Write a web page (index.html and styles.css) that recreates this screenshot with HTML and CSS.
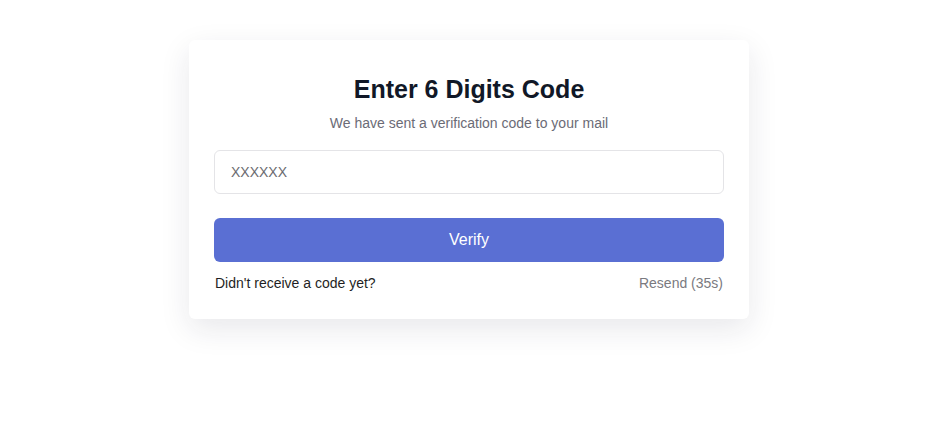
FILE: index.html
```html
<!DOCTYPE html>
<html lang="en">
<head>
    <meta charset="UTF-8">
    <meta name="viewport" content="width=device-width, initial-scale=1.0">
    <title>Verify Code</title>
    <link rel="stylesheet" href="styles.css">
</head>
<body>
    <div class="card">
        <h1 class="title">Enter 6 Digits Code</h1>
        <p class="subtitle">We have sent a verification code to your mail</p>
        <input class="code-input" type="text" placeholder="XXXXXX" maxlength="6">
        <button class="verify-btn">Verify</button>
        <div class="footer">
            <span class="footer-text">Didn't receive a code yet?</span>
            <span class="resend">Resend (35s)</span>
        </div>
    </div>
</body>
</html>
```
FILE: styles.css
```css
/* General */
body {
    font-family: "Liberation Sans", Arial, sans-serif;
    background: #fff;
    margin: 0;
    padding: 40px 0 0 7px;
    min-height: 100vh;
    box-sizing: border-box;
    display: flex;
    justify-content: center;
    align-items: flex-start;
}

.card {
    width: 560px;
    box-sizing: border-box;
    background: #fff;
    border-radius: 6px;
    padding: 35px 25px 28px;
    box-shadow: 0 10px 30px rgba(30, 30, 60, 0.1);
    display: flex;
    flex-direction: column;
}

.title {
    margin: 0;
    font-size: 25px;
    line-height: 28px;
    font-weight: bold;
    text-align: center;
    color: #111827;
}

.subtitle {
    margin: 12px 0 0;
    font-size: 14px;
    line-height: 16px;
    text-align: center;
    color: #6b6b76;
}

/* Input */
.code-input {
    margin-top: 19px;
    height: 44px;
    box-sizing: border-box;
    border: 1px solid #e4e4e7;
    border-radius: 6px;
    padding: 0 16px;
    font-family: inherit;
    font-size: 14px;
    outline: none;
}

.code-input::placeholder {
    color: #6b6b70;
}

.verify-btn {
    margin-top: 24px;
    height: 44px;
    border: none;
    border-radius: 6px;
    background-color: #5a6fd3;
    color: #fff;
    font-family: inherit;
    font-size: 16px;
    cursor: pointer;
}

/* Footer */
.footer {
    margin-top: 13px;
    display: flex;
    justify-content: space-between;
    font-size: 14px;
    line-height: 16px;
    padding: 0 1px;
}

.footer-text {
    color: #1f1f24;
}

.resend {
    color: #7a7a80;
}
```
